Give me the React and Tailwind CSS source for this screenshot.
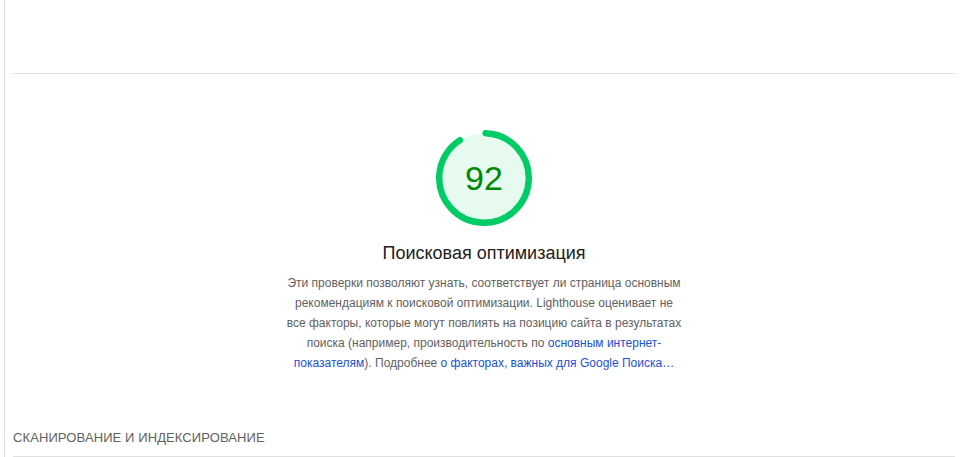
import React from 'react';

function Gauge({ score }) {
    const r = 56;
    const circ = 2 * Math.PI * r;
    const gap = 0.75 * 8;
    const rot = -90 + (0.25 * 8 / circ) * 360;
    return (
        <div className="relative w-[96px] h-[96px]">
            <svg viewBox="0 0 120 120" className="w-[96px] h-[96px]">
                <circle cx="60" cy="60" r="56" fill="#e6faf0" stroke="none" />
                <circle
                    cx="60"
                    cy="60"
                    r="56"
                    fill="none"
                    stroke="#00cc66"
                    strokeWidth="8"
                    strokeLinecap="round"
                    strokeDasharray={`${(score / 100) * circ - gap} ${circ}`}
                    transform={`rotate(${rot} 60 60)`}
                />
            </svg>
            <div className="absolute inset-0 flex items-center justify-center text-[34px] leading-none text-[#008800]">
                {score}
            </div>
        </div>
    );
}

export default function App() {
    return (
        <div className="h-[457px] w-[961px] bg-white font-['Liberation_Sans',Arial,sans-serif] overflow-hidden">
            <div className="ml-[4px] h-full border-l border-[#e0e0e0] pl-[8px] pr-[6px] flex flex-col">
                <div className="h-[74px] shrink-0 border-b border-[#e0e0e0]" />
                <div className="flex flex-col items-center pt-[56px]">
                    <Gauge score={92} />
                    <h2 className="mt-[16px] text-[18px] leading-[22px] text-[#212121]">Поисковая оптимизация</h2>
                    <p className="mt-[9px] w-[400px] text-center text-[12px] leading-[20px] text-[#616161]">
                        Эти проверки позволяют узнать, соответствует ли страница основным рекомендациям к поисковой оптимизации. Lighthouse оценивает не все факторы, которые могут повлиять на позицию сайта в результатах поиска (например, производительность по{' '}
                        <a className="text-[#1a4fd6]">основным интернет-показателям</a>
                        ). Подробнее <a className="text-[#1a4fd6]">о факторах, важных для Google Поиска…</a>
                    </p>
                </div>
                <div className="mt-auto border-b border-[#e0e0e0] pb-[10px]">
                    <div className="text-[13px] leading-[16px] uppercase tracking-[0.1px] text-[#616161]">Сканирование и индексирование</div>
                </div>
            </div>
        </div>
    );
}
